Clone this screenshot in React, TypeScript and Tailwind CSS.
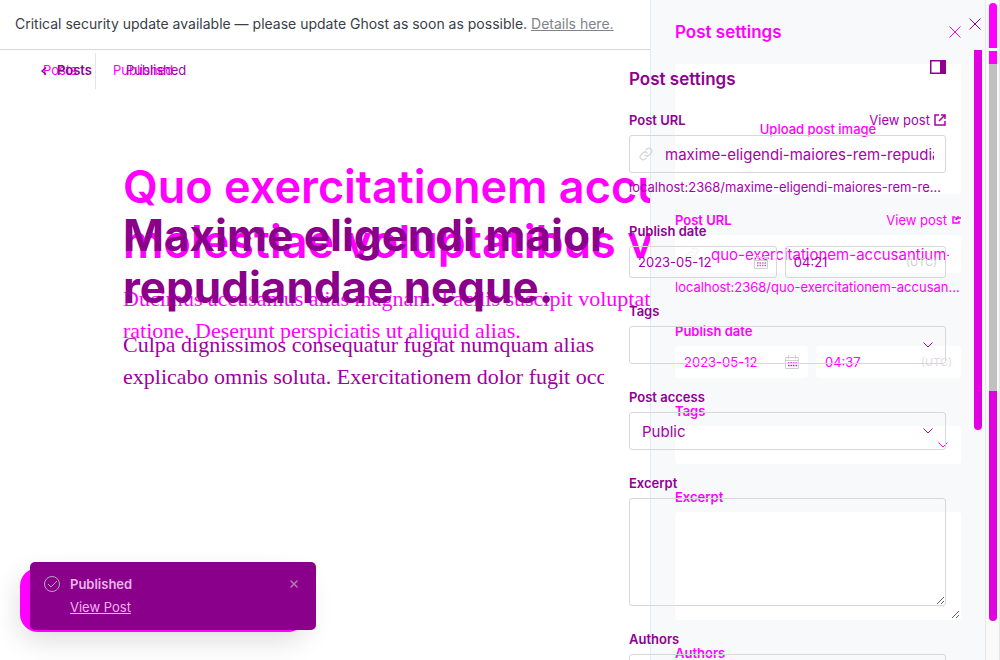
import { useId } from 'react';
import type { ReactNode } from 'react';

type Tone = 'before' | 'after';

const labelTone = { before: 'text-[#ff00ff]', after: 'text-[#900090]' };
const textTone = { before: 'text-[#ff00ff]', after: 'text-[#a800a8]' };
const boxTone = {
  before: 'border-white bg-white',
  after: 'border-[#d6d7d8] bg-transparent',
};

function CloseIcon({ className }: { className: string }) {
  return (
    <svg viewBox="0 0 12 12" fill="none" stroke="currentColor" className={className} aria-hidden="true">
      <path d="M.5.5l11 11M11.5.5l-11 11" />
    </svg>
  );
}

function Chevron({ tone }: { tone: Tone }) {
  return (
    <svg viewBox="0 0 10 6" fill="none" stroke="currentColor" className={`h-[6px] w-[10px] shrink-0 ${textTone[tone]}`} aria-hidden="true">
      <path d="M.5.5L5 5 9.5.5" />
    </svg>
  );
}

function LinkIcon({ tone }: { tone: Tone }) {
  return (
    <svg viewBox="0 0 24 24" fill="none" stroke="currentColor" strokeWidth="1.8" strokeLinecap="round" className={`size-[14px] shrink-0 ${tone === 'before' ? 'text-[#f1f2f4]' : 'text-[#cfcfcf]'}`} aria-hidden="true">
      <path d="M10 14a5 5 0 0 0 7 0l4-4a5 5 0 0 0-7-7l-2 2M14 10a5 5 0 0 0-7 0l-4 4a5 5 0 0 0 7 7l2-2" />
    </svg>
  );
}

function CalendarIcon({ tone }: { tone: Tone }) {
  return (
    <svg viewBox="0 0 14 14" fill="none" className="size-[14px] shrink-0" aria-hidden="true">
      <path d="M.5 2.5h13v11H.5zM3.5 0v4M10.500 0v4M.5 5.500h13" stroke="#cfcfcf" />
      <path d="M3 8h9M3 10.500h9" stroke={tone === 'before' ? '#ff00ff' : '#c060c0'} strokeWidth="1.5" strokeDasharray="1.500 1" />
    </svg>
  );
}

function Field({ tone, label, aside, children }: { tone: Tone; label: string; aside?: ReactNode; children: (id: string) => ReactNode }) {
  const id = useId();
  return (
    <div>
      <div className="mb-[5px] flex h-5 items-center justify-between">
        <label htmlFor={id} className={`text-[13px] leading-5 font-semibold ${labelTone[tone]}`}>{label}</label>
        {aside}
      </div>
      {children(id)}
    </div>
  );
}

function SettingsFields({ tone, slug, preview, time }: { tone: Tone; slug: string; preview: string; time: string }) {
  const box = `flex items-center rounded-[3px] border ${boxTone[tone]}`;
  const input = `min-w-0 flex-1 bg-transparent pt-0.5 outline-none ${textTone[tone]}`;
  const timeId = useId();
  return (
    <div className="flex flex-col gap-[23px]">
      <Field
        tone={tone}
        label="Post URL"
        aside={
          <a href="#post" className={`flex items-center gap-1 text-[13px] leading-5 ${textTone[tone]}`}>
            View post
            {tone === 'after' ? (
              <svg viewBox="0 0 12 12" fill="none" stroke="currentColor" strokeWidth="1.5" className="size-3" aria-hidden="true">
                <path d="M5 1H1v10h10V7M7 1h4v4M11 1L5 7" />
              </svg>
            ) : (
              <svg viewBox="0 0 10 10" fill="none" stroke="currentColor" strokeWidth="1.5" className="size-[10px]" aria-hidden="true">
                <path d="M4 2H2v6h6V6M5 5V2M5 5l3-3M7 1v3M7 3h3" />
              </svg>
            )}
          </a>
        }
      >
        {(id) => (
          <>
            <div className={`${box} h-[38px] gap-3 pr-[11px] pl-[9px]`}>
              <LinkIcon tone={tone} />
              <input id={id} defaultValue={slug} className={`${input} text-[15px]`} />
            </div>
            <p className={`mt-1 mb-px truncate text-[13px] leading-5 ${textTone[tone]}`}>{preview}</p>
          </>
        )}
      </Field>
      <Field tone={tone} label="Publish date">
        {(id) => (
          <div className="grid grid-cols-[133fr_145fr] gap-2">
            <div className={`${box} h-8 min-w-0 px-2`}>
              <input id={id} defaultValue="2023-05-12" className={`${input} text-[13px]`} />
              <CalendarIcon tone={tone} />
            </div>
            <div className={`${box} h-8 min-w-0 px-2`}>
              <label htmlFor={timeId} className="sr-only">Time</label>
              <input id={timeId} defaultValue={time} className={`${input} text-[13px]`} />
              <span className={`text-[11px] ${tone === 'before' ? 'text-[#e6d8e8]' : 'text-[#cfcfcf]'}`}>(UTC)</span>
            </div>
          </div>
        )}
      </Field>
      <Field tone={tone} label="Tags">
        {(id) => (
          <div className={`${box} h-[38px] px-3`}>
            <input id={id} className={`${input} text-[15px]`} />
            <Chevron tone={tone} />
          </div>
        )}
      </Field>
      {tone === 'after' && (
        <Field tone={tone} label="Post access">
          {(id) => (
            <div className={`${box} h-[38px] px-3`}>
              <select id={id} className={`${input} appearance-none text-[15px]`}>
                <option>Public</option>
              </select>
              <Chevron tone={tone} />
            </div>
          )}
        </Field>
      )}
      <Field tone={tone} label="Excerpt">
        {(id) => <textarea id={id} className={`block h-[108px] w-full resize rounded-[3px] border p-2 ${boxTone[tone]}`} />}
      </Field>
      <Field tone={tone} label="Authors">
        {(id) => (
          <div className={`${box} h-[38px] px-3`}>
            <input id={id} className={`${input} text-[15px]`} />
          </div>
        )}
      </Field>
    </div>
  );
}

function BeforeLayer() {
  return (
    <div className="col-start-1 row-start-1 flex h-screen min-w-0 overflow-hidden">
      <div className="min-w-0 flex-1">
        <div className="h-[50px] border-b border-[#d6d7d8] px-[15px] text-[14px] leading-[48px] whitespace-nowrap text-[#394047]">
          Critical security update available — please update Ghost as soon as possible.{' '}
          <a href="#details" className="text-[#7f8488] underline">Details here.</a>
        </div>
        <nav className="flex h-[42px] items-center pl-[43px] text-[13px] text-[#ff00ff]">
          <a href="#posts" className="w-[70px]">Posts</a>
          <span>Published</span>
        </nav>
        <main className="overflow-hidden pt-[67px] pl-[123px] whitespace-nowrap text-[#ff00ff]">
          <h1 className="text-[45px] leading-[55px] font-semibold">
            Quo exercitationem accusantium<br />molestiae voluptatibus vitae
          </h1>
          <p className="mt-[14px] font-['Liberation_Serif',serif] text-[22px] leading-8">
            Ducimus accusamus alias magnam. Facilis suscipit voluptatem<br />ratione. Deserunt perspiciatis ut aliquid alias.
          </p>
        </main>
      </div>
      <aside className="w-[335px] shrink-0 border-l border-[#e3eaef] bg-[#f7f9fb] pr-6 pl-6">
        <div className="flex h-16 items-center justify-between text-[#ff00ff]">
          <h2 className="pt-0.5 text-[17px] font-semibold">Post settings</h2>
          <button type="button" aria-label="Close settings"><CloseIcon className="size-3" /></button>
        </div>
        <button type="button" className="mb-4 h-[130px] w-full rounded-[3px] bg-white pt-0.5 text-[13px] font-medium text-[#ff00ff]">Upload post image</button>
        <SettingsFields tone="before" slug="quo-exercitationem-accusantium-molestiae" preview="localhost:2368/quo-exercitationem-accusantium-molestiae" time="04:37" />
      </aside>
      <div className="flex w-[15px] shrink-0 flex-col items-center border-x border-[#e6e6e6] bg-[#fafafa] pt-[3px]">
        <div className="h-[45px] w-2 rounded-t bg-[#ff00ff]" />
        <div className="mt-[3px] h-[13px] w-2 bg-[#ff00ff]" />
        <div className="h-[327px] w-2 bg-[#c0c0c0]" />
        <div className="h-[230px] w-2 rounded-b bg-[#e000e0]" />
      </div>
    </div>
  );
}

function AfterLayer() {
  return (
    <div className="z-10 col-start-1 row-start-1 flex h-screen min-w-0 overflow-hidden pt-[50px]">
      <div className="min-w-0 flex-1 pr-[25px]">
        <nav className="flex h-[42px] items-center pl-[41px] text-[13px] text-[#a800a8]">
          <a href="#posts" className="flex h-9 w-[55px] items-center gap-[10px] border-r border-[#dfe7ee] font-semibold text-[#900090]">
            <svg viewBox="0 0 6 8" fill="none" stroke="currentColor" strokeWidth="1.5" className="h-2 w-[6px]" aria-hidden="true"><path d="M5 .5L1 4l4 3.500" /></svg>
            Posts
          </a>
          <span className="ml-[30px]">Published</span>
        </nav>
        <main className="overflow-hidden pt-[117px] pl-[123px] whitespace-nowrap">
          <h1 className="text-[44px] leading-[52px] font-bold text-[#8b008b]">
            Maxime eligendi maiores<br />repudiandae neque.
          </h1>
          <p className="mt-4 font-['Liberation_Serif',serif] text-[22px] leading-8 text-[#a000a0]">
            Culpa dignissimos consequatur fugiat numquam alias<br />explicabo omnis soluta. Exercitationem dolor fugit occaecati
          </p>
        </main>
      </div>
      <aside className="w-[317px] shrink-0">
        <div className="mb-[19px] flex h-[41px] items-end justify-between text-[#900090]">
          <h2 className="text-[17px] leading-6 font-semibold">Post settings</h2>
          <button type="button" aria-label="Toggle sidebar" className="mb-[17px]">
            <svg viewBox="0 0 16 14" fill="none" className="h-[14px] w-4" aria-hidden="true">
              <rect x=".75" y=".75" width="14.500" height="12.500" fill="white" stroke="currentColor" strokeWidth="1.5" />
              <path d="M10 0h6v14h-6z" fill="currentColor" />
            </svg>
          </button>
        </div>
        <SettingsFields tone="after" slug="maxime-eligendi-maiores-rem-repudiandae" preview="localhost:2368/maxime-eligendi-maiores-rem-repudiandae-neque" time="04:21" />
      </aside>
      <div className="flex w-[54px] shrink-0 justify-end pr-[18px]">
        <div className="h-[380px] w-2 rounded-b bg-[#e000e0]" />
      </div>
    </div>
  );
}

export default function App() {
  return (
    <div className="relative grid h-screen grid-cols-1 overflow-hidden bg-white font-['Inter',sans-serif]">
      <BeforeLayer />
      <AfterLayer />
      <button type="button" aria-label="Dismiss update" className="absolute top-[18px] right-[19px] z-20 text-[#900090]">
        <CloseIcon className="size-3" />
      </button>
      <div className="absolute bottom-7 left-5 z-10 h-[64px] w-[286px] rounded-[18px] bg-[#ff00ff] shadow-[0_8px_28px_rgba(0,0,0,0.14)]" />
      <div role="status" className="absolute bottom-[30px] left-[30px] z-20 flex h-[68px] w-[286px] gap-[10px] rounded-[5px] bg-[#8b008b] px-[14px] pt-[11px] text-[13px] leading-[23px] text-[#edb5ed]">
        <svg viewBox="0 0 16 16" fill="none" stroke="#b6a8ba" className="mt-[3px] size-4 shrink-0" aria-hidden="true">
          <circle cx="8" cy="8" r="7.500" />
          <path d="M4 8l3 3 6-6" />
        </svg>
        <div className="flex-1">
          <p className="font-semibold">Published</p>
          <a href="#view" className="underline">View Post</a>
        </div>
        <button type="button" aria-label="Dismiss notification" className="mt-[7px] mr-1 h-2 text-[#b47cb4]">
          <svg viewBox="0 0 8 8" fill="none" stroke="currentColor" strokeWidth="1.5" className="size-2" aria-hidden="true">
            <path d="M.5.5l7 7M7.500.5l-7 7" />
          </svg>
        </button>
      </div>
    </div>
  );
}
